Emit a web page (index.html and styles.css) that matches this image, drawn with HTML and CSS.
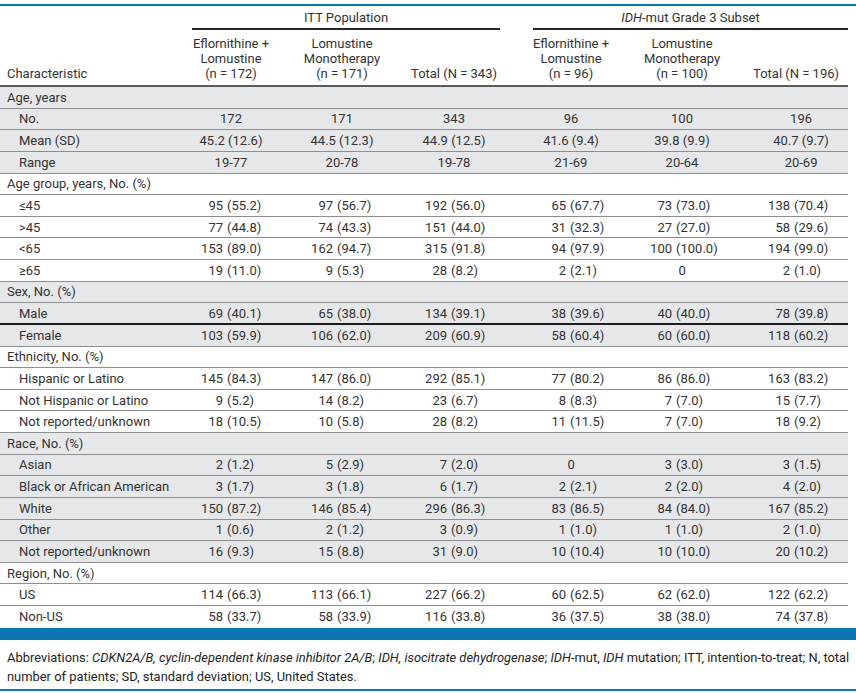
FILE: index.html
```html
<!DOCTYPE html>
<html>
<head>
<meta charset="utf-8">
<link rel="stylesheet" href="styles.css">
</head>
<body>
<div class="page">
  <div class="topline"></div>
  <table class="tbl">
    <colgroup>
      <col class="w-label"><col class="w-c1"><col class="w-c2"><col class="w-c3"><col class="w-c4"><col class="w-c5"><col class="w-c6">
    </colgroup>
    <thead>
      <tr class="grp">
        <th rowspan="2" class="char">Characteristic</th>
        <th colspan="3"><div class="grp-1">ITT Population</div></th>
        <th colspan="3"><div class="grp-2"><i>IDH</i>-mut Grade 3 Subset</div></th>
      </tr>
      <tr class="sub">
        <th>Eflornithine +<br>Lomustine<br>(n = 172)</th>
        <th>Lomustine<br>Monotherapy<br>(n = 171)</th>
        <th>Total (N = 343)</th>
        <th>Eflornithine +<br>Lomustine<br>(n = 96)</th>
        <th>Lomustine<br>Monotherapy<br>(n = 100)</th>
        <th>Total (N = 196)</th>
      </tr>
    </thead>
    <tbody>
      <tr class="gray sec"><td colspan="7">Age, years</td></tr>
      <tr class="gray"><td class="lab">No.</td><td class="c">172</td><td class="c">171</td><td class="c">343</td><td class="c">96</td><td class="c">100</td><td class="c">196</td></tr>
      <tr class="gray"><td class="lab">Mean (SD)</td><td class="c">45.2 (12.6)</td><td class="c">44.5 (12.3)</td><td class="c">44.9 (12.5)</td><td class="c">41.6 (9.4)</td><td class="c">39.8 (9.9)</td><td class="c">40.7 (9.7)</td></tr>
      <tr class="gray"><td class="lab">Range</td><td class="c">19-77</td><td class="c">20-78</td><td class="c">19-78</td><td class="c">21-69</td><td class="c">20-64</td><td class="c">20-69</td></tr>

      <tr class="sec"><td colspan="7">Age group, years, No. (%)</td></tr>
      <tr><td class="lab">≤45</td><td><span class="n">95</span><span class="p">(55.2)</span></td><td><span class="n">97</span><span class="p">(56.7)</span></td><td><span class="n">192</span><span class="p">(56.0)</span></td><td><span class="n">65</span><span class="p">(67.7)</span></td><td><span class="n">73</span><span class="p">(73.0)</span></td><td><span class="n">138</span><span class="p">(70.4)</span></td></tr>
      <tr><td class="lab">&gt;45</td><td><span class="n">77</span><span class="p">(44.8)</span></td><td><span class="n">74</span><span class="p">(43.3)</span></td><td><span class="n">151</span><span class="p">(44.0)</span></td><td><span class="n">31</span><span class="p">(32.3)</span></td><td><span class="n">27</span><span class="p">(27.0)</span></td><td><span class="n">58</span><span class="p">(29.6)</span></td></tr>
      <tr><td class="lab">&lt;65</td><td><span class="n">153</span><span class="p">(89.0)</span></td><td><span class="n">162</span><span class="p">(94.7)</span></td><td><span class="n">315</span><span class="p">(91.8)</span></td><td><span class="n">94</span><span class="p">(97.9)</span></td><td><span class="n">100</span><span class="p">(100.0)</span></td><td><span class="n">194</span><span class="p">(99.0)</span></td></tr>
      <tr><td class="lab">≥65</td><td><span class="n">19</span><span class="p">(11.0)</span></td><td><span class="n">9</span><span class="p">(5.3)</span></td><td><span class="n">28</span><span class="p">(8.2)</span></td><td><span class="n">2</span><span class="p">(2.1)</span></td><td class="c">0</td><td><span class="n">2</span><span class="p">(1.0)</span></td></tr>

      <tr class="gray sec"><td colspan="7">Sex, No. (%)</td></tr>
      <tr class="gray heavy"><td class="lab">Male</td><td><span class="n">69</span><span class="p">(40.1)</span></td><td><span class="n">65</span><span class="p">(38.0)</span></td><td><span class="n">134</span><span class="p">(39.1)</span></td><td><span class="n">38</span><span class="p">(39.6)</span></td><td><span class="n">40</span><span class="p">(40.0)</span></td><td><span class="n">78</span><span class="p">(39.8)</span></td></tr>
      <tr class="gray"><td class="lab">Female</td><td><span class="n">103</span><span class="p">(59.9)</span></td><td><span class="n">106</span><span class="p">(62.0)</span></td><td><span class="n">209</span><span class="p">(60.9)</span></td><td><span class="n">58</span><span class="p">(60.4)</span></td><td><span class="n">60</span><span class="p">(60.0)</span></td><td><span class="n">118</span><span class="p">(60.2)</span></td></tr>

      <tr class="sec"><td colspan="7">Ethnicity, No. (%)</td></tr>
      <tr><td class="lab">Hispanic or Latino</td><td><span class="n">145</span><span class="p">(84.3)</span></td><td><span class="n">147</span><span class="p">(86.0)</span></td><td><span class="n">292</span><span class="p">(85.1)</span></td><td><span class="n">77</span><span class="p">(80.2)</span></td><td><span class="n">86</span><span class="p">(86.0)</span></td><td><span class="n">163</span><span class="p">(83.2)</span></td></tr>
      <tr><td class="lab">Not Hispanic or Latino</td><td><span class="n">9</span><span class="p">(5.2)</span></td><td><span class="n">14</span><span class="p">(8.2)</span></td><td><span class="n">23</span><span class="p">(6.7)</span></td><td><span class="n">8</span><span class="p">(8.3)</span></td><td><span class="n">7</span><span class="p">(7.0)</span></td><td><span class="n">15</span><span class="p">(7.7)</span></td></tr>
      <tr><td class="lab">Not reported/unknown</td><td><span class="n">18</span><span class="p">(10.5)</span></td><td><span class="n">10</span><span class="p">(5.8)</span></td><td><span class="n">28</span><span class="p">(8.2)</span></td><td><span class="n">11</span><span class="p">(11.5)</span></td><td><span class="n">7</span><span class="p">(7.0)</span></td><td><span class="n">18</span><span class="p">(9.2)</span></td></tr>

      <tr class="gray sec"><td colspan="7">Race, No. (%)</td></tr>
      <tr class="gray"><td class="lab">Asian</td><td><span class="n">2</span><span class="p">(1.2)</span></td><td><span class="n">5</span><span class="p">(2.9)</span></td><td><span class="n">7</span><span class="p">(2.0)</span></td><td class="c">0</td><td><span class="n">3</span><span class="p">(3.0)</span></td><td><span class="n">3</span><span class="p">(1.5)</span></td></tr>
      <tr class="gray"><td class="lab">Black or African American</td><td><span class="n">3</span><span class="p">(1.7)</span></td><td><span class="n">3</span><span class="p">(1.8)</span></td><td><span class="n">6</span><span class="p">(1.7)</span></td><td><span class="n">2</span><span class="p">(2.1)</span></td><td><span class="n">2</span><span class="p">(2.0)</span></td><td><span class="n">4</span><span class="p">(2.0)</span></td></tr>
      <tr class="gray"><td class="lab">White</td><td><span class="n">150</span><span class="p">(87.2)</span></td><td><span class="n">146</span><span class="p">(85.4)</span></td><td><span class="n">296</span><span class="p">(86.3)</span></td><td><span class="n">83</span><span class="p">(86.5)</span></td><td><span class="n">84</span><span class="p">(84.0)</span></td><td><span class="n">167</span><span class="p">(85.2)</span></td></tr>
      <tr class="gray"><td class="lab">Other</td><td><span class="n">1</span><span class="p">(0.6)</span></td><td><span class="n">2</span><span class="p">(1.2)</span></td><td><span class="n">3</span><span class="p">(0.9)</span></td><td><span class="n">1</span><span class="p">(1.0)</span></td><td><span class="n">1</span><span class="p">(1.0)</span></td><td><span class="n">2</span><span class="p">(1.0)</span></td></tr>
      <tr class="gray"><td class="lab">Not reported/unknown</td><td><span class="n">16</span><span class="p">(9.3)</span></td><td><span class="n">15</span><span class="p">(8.8)</span></td><td><span class="n">31</span><span class="p">(9.0)</span></td><td><span class="n">10</span><span class="p">(10.4)</span></td><td><span class="n">10</span><span class="p">(10.0)</span></td><td><span class="n">20</span><span class="p">(10.2)</span></td></tr>

      <tr class="sec"><td colspan="7">Region, No. (%)</td></tr>
      <tr><td class="lab">US</td><td><span class="n">114</span><span class="p">(66.3)</span></td><td><span class="n">113</span><span class="p">(66.1)</span></td><td><span class="n">227</span><span class="p">(66.2)</span></td><td><span class="n">60</span><span class="p">(62.5)</span></td><td><span class="n">62</span><span class="p">(62.0)</span></td><td><span class="n">122</span><span class="p">(62.2)</span></td></tr>
      <tr class="last"><td class="lab">Non-US</td><td><span class="n">58</span><span class="p">(33.7)</span></td><td><span class="n">58</span><span class="p">(33.9)</span></td><td><span class="n">116</span><span class="p">(33.8)</span></td><td><span class="n">36</span><span class="p">(37.5)</span></td><td><span class="n">38</span><span class="p">(38.0)</span></td><td><span class="n">74</span><span class="p">(37.8)</span></td></tr>
    </tbody>
  </table>
  <div class="bar"></div>
  <p class="note">Abbreviations: <i>CDKN2A/B, cyclin-dependent kinase inhibitor 2A/B</i>; <i>IDH, isocitrate dehydrogenase</i>; <i>IDH</i>-mut, <i>IDH</i> mutation; ITT, intention-to-treat; N, total<br>number of patients; SD, standard deviation; US, United States.</p>
</div>
</body>
</html>
```

FILE: styles.css
```css
html, body {
  margin: 0;
  padding: 0;
  background: #ffffff;
}

.page {
  width: 856px;
  padding-top: 4px;
  font-family: Roboto, "Liberation Sans", Arial, sans-serif;
  font-size: 13px;
  color: #333333;
}

.topline {
  height: 2px;
  background: #0b76b3;
}

.tbl {
  width: 848px;
  border-collapse: separate;
  border-spacing: 0;
  table-layout: fixed;
}

.w-label { width: 176px; }
.w-c1 { width: 110px; }
.w-c2 { width: 112px; }
.w-c3 { width: 112px; }
.w-c4 { width: 122px; }
.w-c5 { width: 100px; }
.w-c6 { width: 116px; }

.tbl th {
  font-weight: normal;
  padding: 0;
  line-height: 15px;
}

.grp th {
  text-align: center;
  vertical-align: top;
}

.grp-1 {
  margin: 0 10px 0 16px;
  padding: 4px 0 3px;
  border-bottom: 2px solid #262626;
}

.grp-2 {
  margin: 0 0 0 23px;
  padding: 4px 0 3px;
  border-bottom: 2px solid #262626;
}

.tbl th.char {
  text-align: left;
  vertical-align: bottom;
  padding: 0 0 4px 7px;
  border-bottom: 2px solid #5a5a5a;
}

.sub th {
  text-align: center;
  vertical-align: bottom;
  padding: 6px 0 4px;
  border-bottom: 2px solid #5a5a5a;
}

.sub th:nth-child(6) {
  padding-left: 12px;
}

.tbl td {
  padding: 2.82px 0;
  line-height: 15px;
  border-bottom: 1px solid #8e8e8e;
  white-space: nowrap;
  text-align: left;
}

.tbl tr.sec td {
  padding-left: 7px;
}

.tbl td.lab {
  padding-left: 19px;
}

.tbl tr.gray td {
  background: #e6e7e8;
}

.tbl td.c {
  text-align: center;
}

.tbl td:nth-child(7).c {
  padding-left: 22px;
}

.tbl tr.heavy td {
  border-bottom: 2px solid #1e1e1e;
  padding-bottom: 1.82px;
}

.tbl tr.last td {
  border-bottom: none;
  padding-bottom: 3.82px;
}

.n {
  display: inline-block;
  text-align: right;
}

.p {
  margin-left: 4px;
}

td:nth-child(2) .n { width: 47px; }
td:nth-child(3) .n { width: 47px; }
td:nth-child(4) .n { width: 49px; }
td:nth-child(5) .n { width: 56px; }
td:nth-child(6) .n { width: 40px; }
td:nth-child(7) .n { width: 58px; }

.bar {
  height: 12px;
  background: #0b76b3;
}

.note {
  margin: 0;
  padding: 8.5px 0 3px 7px;
  line-height: 19px;
  font-size: 12.9px;
  white-space: nowrap;
  color: #1e1e1e;
  border-bottom: 2px solid #0b76b3;
}
```
